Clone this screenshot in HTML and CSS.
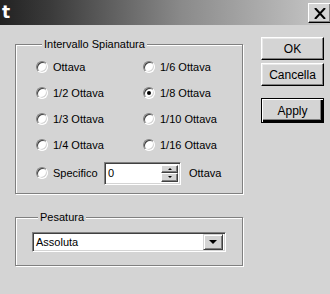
FILE: index.html
```html
<!DOCTYPE html>
<html lang="it">
<head>
    <meta charset="UTF-8">
    <title>t</title>
    <link rel="stylesheet" href="styles.css">
</head>
<body>

<div class="titlebar">
    <span class="title">t</span>
    <button class="close-button" type="button">
        <svg width="12" height="11" viewBox="0 0 12 11"><path d="M1 0 L11 11 M11 0 L1 11" stroke="#000" stroke-width="2"/></svg>
    </button>
</div>

<div class="dialog">
    <div class="left">
        <fieldset class="group">
            <legend>Intervallo Spianatura</legend>
            <div class="radio-grid">
                <label class="radio"><span class="dot"></span>Ottava</label>
                <label class="radio"><span class="dot"></span>1/6 Ottava</label>
                <label class="radio"><span class="dot"></span>1/2 Ottava</label>
                <label class="radio"><span class="dot checked"></span>1/8 Ottava</label>
                <label class="radio"><span class="dot"></span>1/3 Ottava</label>
                <label class="radio"><span class="dot"></span>1/10 Ottava</label>
                <label class="radio"><span class="dot"></span>1/4 Ottava</label>
                <label class="radio"><span class="dot"></span>1/16 Ottava</label>
            </div>
            <div class="specific-row">
                <label class="radio"><span class="dot"></span>Specifico</label>
                <div class="spin">
                    <div class="spin-text">0</div>
                    <div class="spin-buttons">
                        <span class="spin-btn"><i class="arrow up"></i></span>
                        <span class="spin-btn"><i class="arrow down"></i></span>
                    </div>
                </div>
                <span class="unit">Ottava</span>
            </div>
        </fieldset>

        <fieldset class="group weight">
            <legend>Pesatura</legend>
            <div class="combo">
                <span class="combo-text">Assoluta</span>
                <span class="combo-btn"><i class="arrow down big"></i></span>
            </div>
        </fieldset>
    </div>

    <div class="buttons">
        <button class="btn" type="button">OK</button>
        <button class="btn" type="button">Cancella</button>
        <button class="btn default" type="button">Apply</button>
    </div>
</div>

</body>
</html>
```

FILE: styles.css
```css
body {
    margin: 0;
    background-color: #d4d4d4;
    font-family: "Liberation Sans", Arial, sans-serif;
    font-size: 11px;
    color: #000;
    width: 330px;
    height: 294px;
    overflow: hidden;
}
.titlebar {
    height: 25px;
    display: flex;
    align-items: center;
    justify-content: space-between;
    background: linear-gradient(to right, #222222, #3a3a3a 15%, #8a8a8a 55%, #c8c8c8);
}
.title {
    color: #fff;
    font-weight: bold;
    font-size: 17px;
    font-family: "DejaVu Sans", sans-serif;
    padding-left: 2px;
    margin-top: -2px;
}
.close-button {
    width: 23px;
    height: 20px;
    margin-top: 1px;
    margin-right: -1px;
    padding: 0;
    background-color: #d4d4d4;
    border: 1px solid;
    border-color: #fff #000 #000 #fff;
    box-shadow: inset -1px -1px 0 #808080;
    display: flex;
    align-items: center;
    justify-content: center;
}
.dialog {
    display: flex;
    padding: 13px 0 0 15px;
}
.left {
    width: 229px;
}
.group {
    margin: 0;
    padding: 3px 0 7px 20px;
    width: 228px;
    box-sizing: border-box;
    border: 1px solid #808080;
    box-shadow: inset 1px 1px 0 #fff, 1px 1px 0 #fff;
    min-width: 0;
}
.group legend {
    margin-left: 6px;
    padding: 0 2px;
    line-height: 13px;
    background-color: #d4d4d4;
}
.radio-grid {
    display: grid;
    grid-template-columns: 107px 107px;
    grid-auto-rows: 26px;
}
.radio {
    display: flex;
    align-items: center;
    gap: 5px;
    white-space: nowrap;
}
.dot {
    width: 12px;
    height: 12px;
    box-sizing: border-box;
    border-radius: 50%;
    background-color: #fff;
    border: 1px solid;
    border-color: #808080 #fff #fff #808080;
    box-shadow: inset 1px 1px 0 #404040, inset -1px -1px 0 #d4d4d4;
    display: flex;
    align-items: center;
    justify-content: center;
    flex: none;
}
.dot.checked::after {
    content: "";
    width: 4px;
    height: 4px;
    border-radius: 50%;
    background-color: #000;
}
.specific-row {
    display: flex;
    align-items: center;
    height: 26px;
    margin-top: 2px;
}
.specific-row .radio {
    width: 68px;
}
.spin {
    display: flex;
    width: 77px;
    height: 23px;
    box-sizing: border-box;
    border: 1px solid;
    border-color: #808080 #fff #fff #808080;
    box-shadow: inset 1px 1px 0 #404040, inset -1px -1px 0 #d4d4d4;
    background-color: #fff;
    padding: 2px 2px 2px 2px;
}
.spin-text {
    flex: 1;
    line-height: 17px;
    padding-left: 1px;
}
.spin-buttons {
    display: flex;
    flex-direction: column;
    width: 17px;
}
.spin-btn {
    flex: 1;
    background-color: #d4d4d4;
    border: 1px solid;
    border-color: #fff #404040 #404040 #fff;
    box-shadow: inset -1px -1px 0 #808080;
    display: flex;
    align-items: center;
    justify-content: center;
}
.arrow {
    width: 0;
    height: 0;
    border-left: 2px solid transparent;
    border-right: 2px solid transparent;
}
.arrow.up {
    border-bottom: 2px solid #000;
}
.arrow.down {
    border-top: 2px solid #000;
}
.arrow.big {
    border-left-width: 4px;
    border-right-width: 4px;
    border-top-width: 4px;
}
.unit {
    margin-left: 8px;
}
.weight {
    margin-top: 17px;
    padding: 8px 0 13px 16px;
}
.combo {
    display: flex;
    align-items: center;
    width: 194px;
    height: 20px;
    box-sizing: border-box;
    border: 1px solid;
    border-color: #808080 #fff #fff #808080;
    box-shadow: inset 1px 1px 0 #404040, inset -1px -1px 0 #d4d4d4;
    background-color: #fff;
    padding: 2px;
}
.combo-text {
    flex: 1;
    padding-left: 1px;
}
.combo-btn {
    width: 20px;
    height: 16px;
    box-sizing: border-box;
    background-color: #d4d4d4;
    border: 1px solid;
    border-color: #d4d4d4 #404040 #404040 #d4d4d4;
    box-shadow: inset 1px 1px 0 #fff, inset -1px -1px 0 #808080;
    display: flex;
    align-items: center;
    justify-content: center;
}
.buttons {
    display: flex;
    flex-direction: column;
    margin-left: 17px;
    margin-top: -1px;
}
.btn {
    width: 63px;
    height: 23px;
    margin-bottom: 3px;
    padding: 0;
    font: inherit;
    font-size: 12px;
    background-color: #d4d4d4;
    border: 1px solid;
    border-color: #fff #000 #000 #fff;
    box-shadow: inset -1px -1px 0 #808080, inset 1px 1px 0 #e8e8e8;
}
.btn.default {
    margin-top: 9px;
    height: 25px;
    border: 1px solid #000;
    box-shadow: inset 1px 1px 0 #fff, inset -2px -2px 0 #000, inset -3px -3px 0 #808080;
}
```
